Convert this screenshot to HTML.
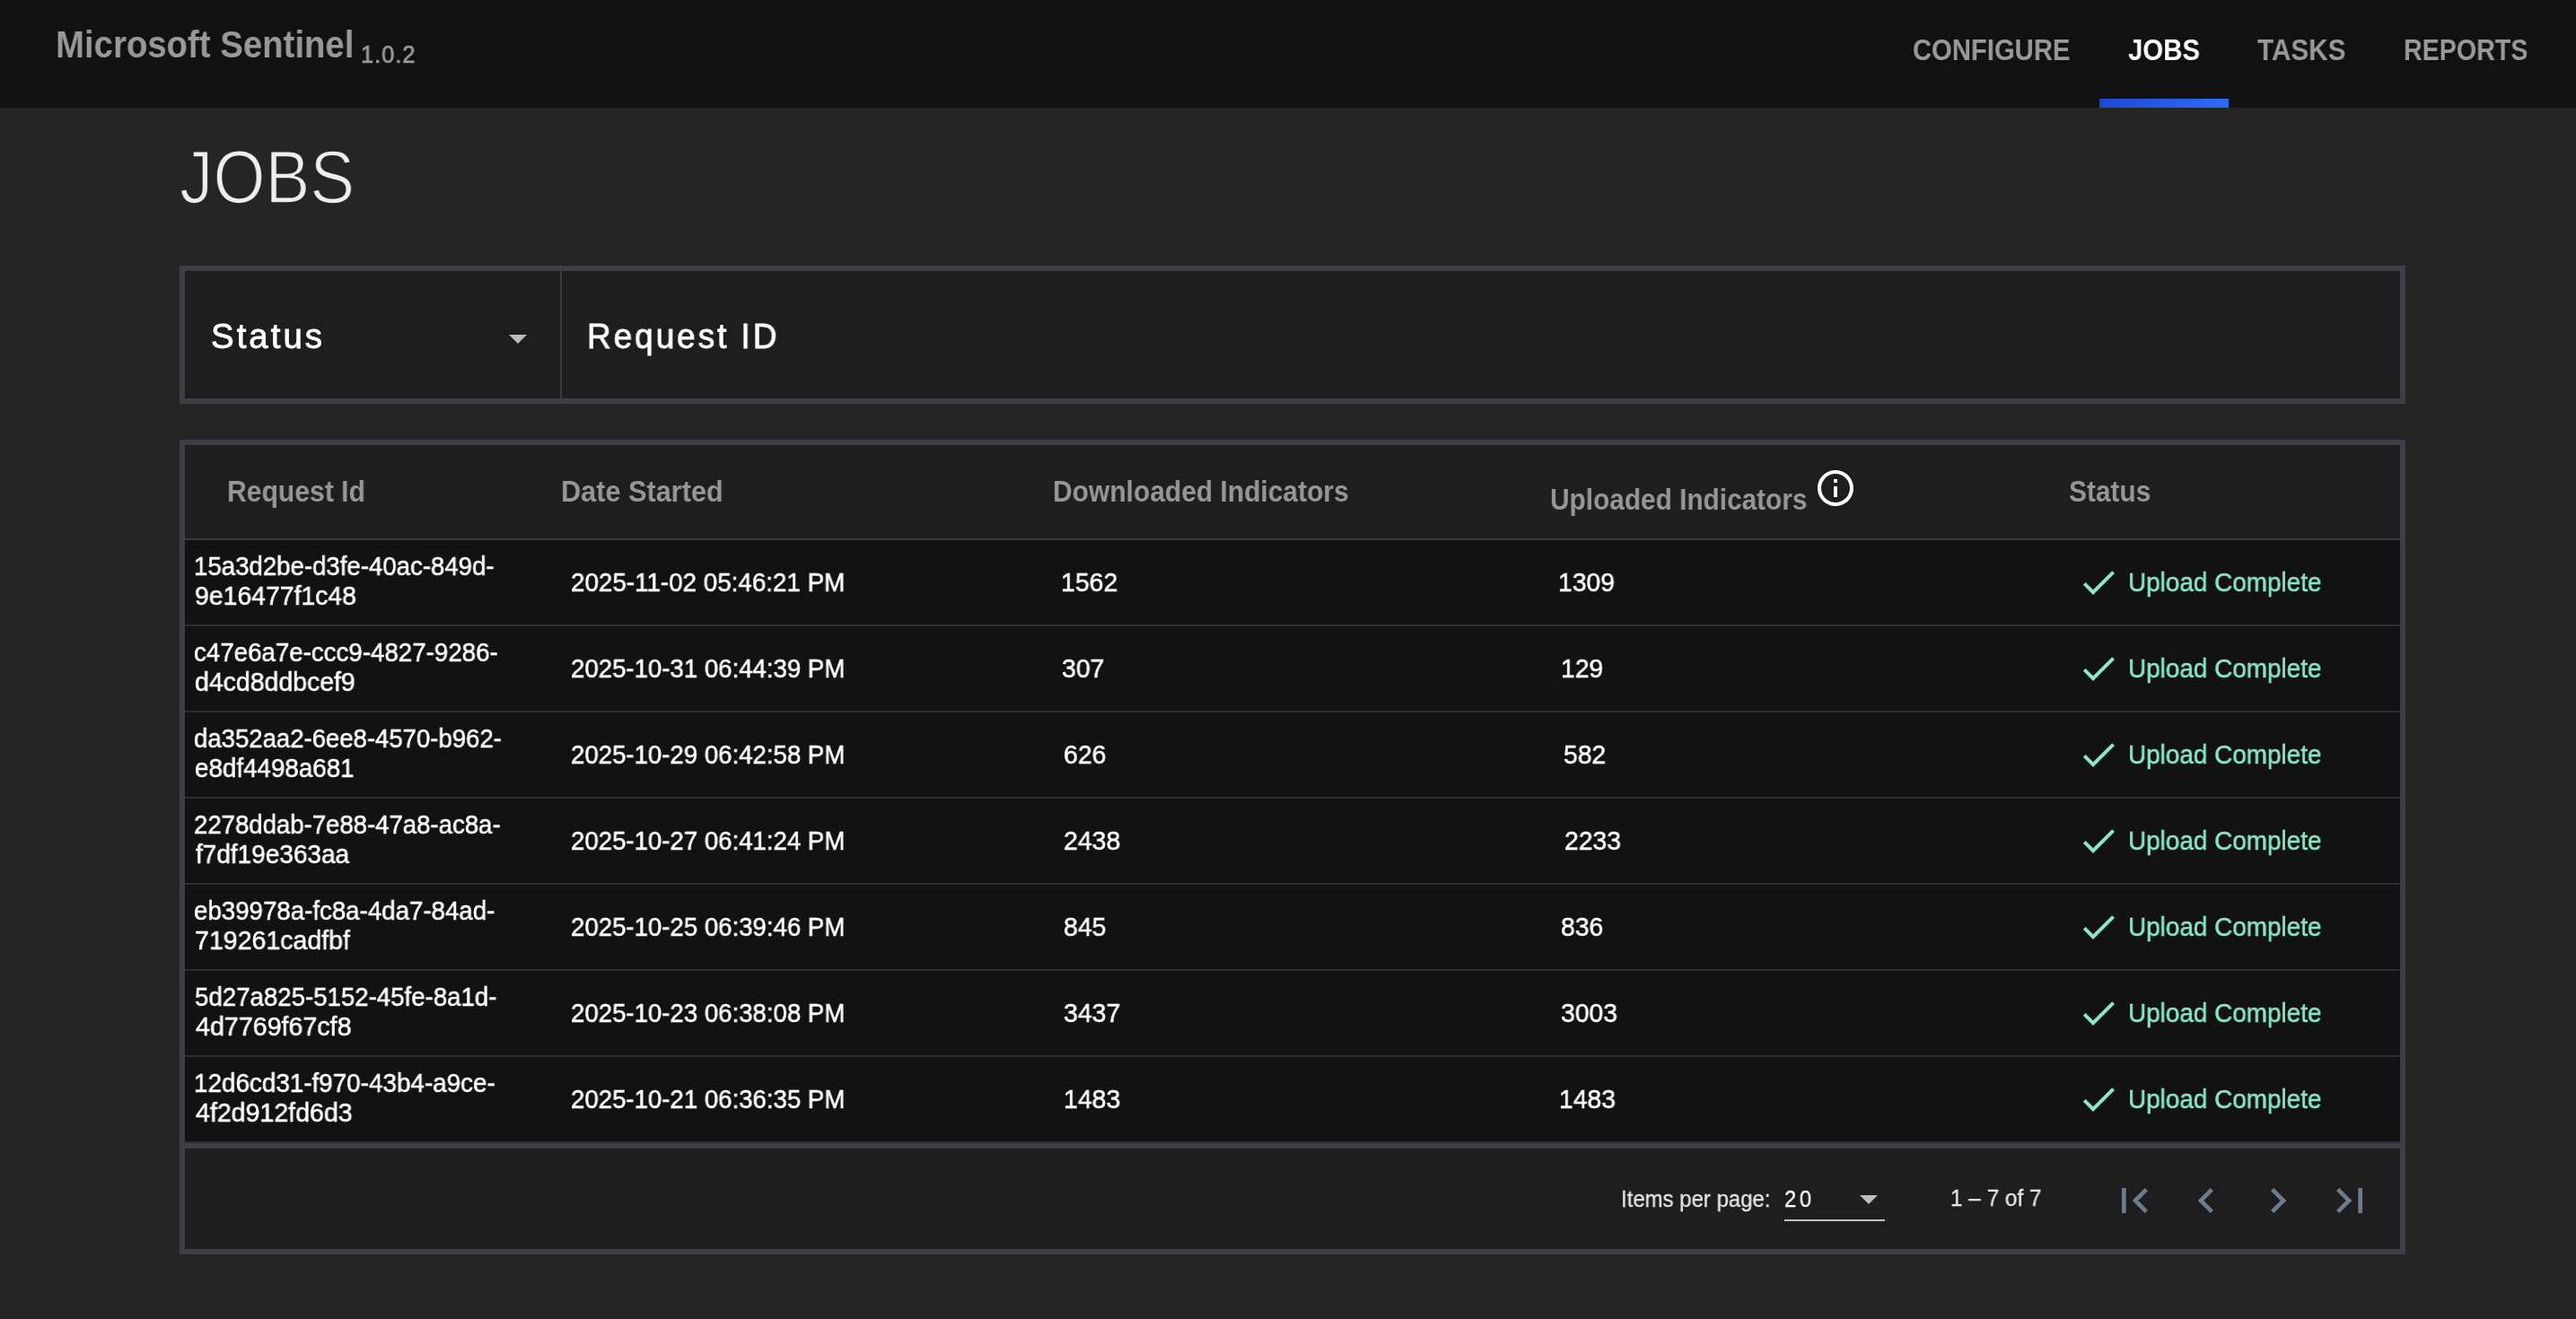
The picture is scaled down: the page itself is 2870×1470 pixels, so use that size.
<!DOCTYPE html>
<html><head><meta charset="utf-8"><title>Microsoft Sentinel - Jobs</title>
<style>
html,body{margin:0;padding:0;}
body{width:2870px;height:1470px;overflow:hidden;background:#252525;position:relative;font-family:"Liberation Sans",sans-serif;}
.r{position:absolute;display:block;}
.t{position:absolute;white-space:pre;transform-origin:0 50%;-webkit-font-smoothing:antialiased;will-change:transform;}
@media (max-width:2000px){html{zoom:0.5;}}
</style></head><body>
<div class="r" style="left:0px;top:0px;width:2870px;height:120px;background:#111111;"></div>
<div class="r" style="left:2339px;top:110px;width:144px;height:10px;background:linear-gradient(90deg,#1c49d2,#2e6cfb);"></div>
<div class="r" style="left:200px;top:296px;width:2480px;height:154px;background:#3e3e48;"></div>
<div class="r" style="left:206px;top:302px;width:2468px;height:142px;background:#1e1e1e;"></div>
<div class="r" style="left:624px;top:302px;width:2px;height:142px;background:#3a3a44;"></div>
<div class="r" style="left:200px;top:490px;width:2480px;height:908px;background:#3e3e48;"></div>
<div class="r" style="left:206px;top:496px;width:2468px;height:104px;background:#1e1e1e;"></div>
<div class="r" style="left:206px;top:600px;width:2468px;height:2px;background:#3a3a3a;"></div>
<div class="r" style="left:206px;top:602px;width:2468px;height:94px;background:#121212;"></div>
<div class="r" style="left:206px;top:696px;width:2468px;height:2px;background:#2e2e2e;"></div>
<div class="r" style="left:206px;top:698px;width:2468px;height:94px;background:#121212;"></div>
<div class="r" style="left:206px;top:792px;width:2468px;height:2px;background:#2e2e2e;"></div>
<div class="r" style="left:206px;top:794px;width:2468px;height:94px;background:#121212;"></div>
<div class="r" style="left:206px;top:888px;width:2468px;height:2px;background:#2e2e2e;"></div>
<div class="r" style="left:206px;top:890px;width:2468px;height:94px;background:#121212;"></div>
<div class="r" style="left:206px;top:984px;width:2468px;height:2px;background:#2e2e2e;"></div>
<div class="r" style="left:206px;top:986px;width:2468px;height:94px;background:#121212;"></div>
<div class="r" style="left:206px;top:1080px;width:2468px;height:2px;background:#2e2e2e;"></div>
<div class="r" style="left:206px;top:1082px;width:2468px;height:94px;background:#121212;"></div>
<div class="r" style="left:206px;top:1176px;width:2468px;height:2px;background:#2e2e2e;"></div>
<div class="r" style="left:206px;top:1178px;width:2468px;height:94px;background:#121212;"></div>
<div class="r" style="left:206px;top:1272px;width:2468px;height:2px;background:#2e2e2e;"></div>
<div class="r" style="left:206px;top:1280px;width:2468px;height:112px;background:#1e1e1e;"></div>
<div class="r" style="left:1988px;top:1359px;width:112px;height:2px;background:#c4c4c4;"></div>
<svg class="r" style="left:567px;top:373px" width="20" height="10" viewBox="0 0 20 10"><path d="M0 0h20L10 10z" fill="#bdbdbd"/></svg>
<svg class="r" style="left:2072px;top:1332px" width="20" height="10" viewBox="0 0 20 10"><path d="M0 0h20L10 10z" fill="#bdbdbd"/></svg>
<svg class="r" style="left:2021px;top:520px" width="48" height="48" viewBox="0 0 24 24"><path fill="#ffffff" d="M11 7h2v2h-2zm0 4h2v6h-2zm1-9C6.48 2 2 6.48 2 12s4.48 10 10 10 10-4.48 10-10S17.52 2 12 2zm0 18c-4.41 0-8-3.59-8-8s3.59-8 8-8 8 3.59 8 8-3.59 8-8 8z"/></svg>
<svg class="r" style="left:2314px;top:625px" width="48" height="48" viewBox="0 0 24 24"><path fill="#8ae6c6" d="M9 16.17L4.83 12l-1.42 1.41L9 19 21 7l-1.41-1.41z"/></svg>
<svg class="r" style="left:2314px;top:721px" width="48" height="48" viewBox="0 0 24 24"><path fill="#8ae6c6" d="M9 16.17L4.83 12l-1.42 1.41L9 19 21 7l-1.41-1.41z"/></svg>
<svg class="r" style="left:2314px;top:817px" width="48" height="48" viewBox="0 0 24 24"><path fill="#8ae6c6" d="M9 16.17L4.83 12l-1.42 1.41L9 19 21 7l-1.41-1.41z"/></svg>
<svg class="r" style="left:2314px;top:913px" width="48" height="48" viewBox="0 0 24 24"><path fill="#8ae6c6" d="M9 16.17L4.83 12l-1.42 1.41L9 19 21 7l-1.41-1.41z"/></svg>
<svg class="r" style="left:2314px;top:1009px" width="48" height="48" viewBox="0 0 24 24"><path fill="#8ae6c6" d="M9 16.17L4.83 12l-1.42 1.41L9 19 21 7l-1.41-1.41z"/></svg>
<svg class="r" style="left:2314px;top:1105px" width="48" height="48" viewBox="0 0 24 24"><path fill="#8ae6c6" d="M9 16.17L4.83 12l-1.42 1.41L9 19 21 7l-1.41-1.41z"/></svg>
<svg class="r" style="left:2314px;top:1201px" width="48" height="48" viewBox="0 0 24 24"><path fill="#8ae6c6" d="M9 16.17L4.83 12l-1.42 1.41L9 19 21 7l-1.41-1.41z"/></svg>
<svg class="r" style="left:2350px;top:1310px" width="56" height="56" viewBox="0 0 24 24"><path fill="#6d7b91" d="M18.41 16.59L13.82 12l4.59-4.59L17 6l-6 6 6 6zM6 6h2v12H6z"/></svg>
<svg class="r" style="left:2430px;top:1310px" width="56" height="56" viewBox="0 0 24 24"><path fill="#6d7b91" d="M15.41 7.41L14 6l-6 6 6 6 1.41-1.41L10.83 12z"/></svg>
<svg class="r" style="left:2510px;top:1310px" width="56" height="56" viewBox="0 0 24 24"><path fill="#6d7b91" d="M10 6L8.59 7.41 13.17 12l-4.58 4.59L10 18l6-6z"/></svg>
<svg class="r" style="left:2590px;top:1310px" width="56" height="56" viewBox="0 0 24 24"><path fill="#6d7b91" d="M5.59 7.41L10.18 12l-4.59 4.59L7 18l6-6-6-6zM16 6h2v12h-2z"/></svg>
<span class="t" style="left:62.22px;top:28.00px;font-size:43px;line-height:43px;color:#989898;font-weight:bold;transform:scaleX(0.8919);">Microsoft Sentinel</span>
<span class="t" style="left:402.46px;top:48.04px;font-size:27px;line-height:27px;color:#989898;letter-spacing:1px;-webkit-text-stroke:0.7px #989898;transform:scaleX(0.9454);">1.0.2</span>
<span class="t" style="left:2131.41px;top:39.07px;font-size:33px;line-height:33px;color:#999999;font-weight:bold;transform:scaleX(0.8858);">CONFIGURE</span>
<span class="t" style="left:2370.80px;top:39.07px;font-size:33px;line-height:33px;color:#ffffff;font-weight:bold;transform:scaleX(0.8914);">JOBS</span>
<span class="t" style="left:2515.40px;top:39.07px;font-size:33px;line-height:33px;color:#999999;font-weight:bold;transform:scaleX(0.8996);">TASKS</span>
<span class="t" style="left:2677.86px;top:39.07px;font-size:33px;line-height:33px;color:#999999;font-weight:bold;transform:scaleX(0.8677);">REPORTS</span>
<span class="t" style="left:200.26px;top:155.39px;font-size:84px;line-height:84px;color:#eeeeee;-webkit-text-stroke:1.7px #252525;transform:scaleX(0.8901);">JOBS</span>
<span class="t" style="left:235.19px;top:356.23px;font-size:38px;line-height:38px;color:#ffffff;letter-spacing:3px;-webkit-text-stroke:0.8px #ffffff;transform:scaleX(1.0105);">Status</span>
<span class="t" style="left:654.18px;top:356.03px;font-size:38px;line-height:38px;color:#ffffff;letter-spacing:3px;-webkit-text-stroke:0.8px #ffffff;transform:scaleX(0.9739);">Request ID</span>
<span class="t" style="left:253.47px;top:531.47px;font-size:33px;line-height:33px;color:#979797;font-weight:bold;transform:scaleX(0.9129);">Request Id</span>
<span class="t" style="left:624.74px;top:531.27px;font-size:33px;line-height:33px;color:#979797;font-weight:bold;transform:scaleX(0.9294);">Date Started</span>
<span class="t" style="left:1172.58px;top:531.07px;font-size:33px;line-height:33px;color:#979797;font-weight:bold;transform:scaleX(0.9080);">Downloaded Indicators</span>
<span class="t" style="left:1727.00px;top:540.17px;font-size:33px;line-height:33px;color:#979797;font-weight:bold;transform:scaleX(0.9033);">Uploaded Indicators</span>
<span class="t" style="left:2304.90px;top:531.07px;font-size:33px;line-height:33px;color:#979797;font-weight:bold;transform:scaleX(0.9055);">Status</span>
<span class="t" style="left:216.05px;top:617.35px;font-size:29px;line-height:29px;color:#ffffff;-webkit-text-stroke:0.5px #ffffff;transform:scaleX(0.9520);">15a3d2be-d3fe-40ac-849d-</span>
<span class="t" style="left:216.77px;top:650.05px;font-size:29px;line-height:29px;color:#ffffff;-webkit-text-stroke:0.5px #ffffff;transform:scaleX(0.9790);">9e16477f1c48</span>
<span class="t" style="left:635.79px;top:635.25px;font-size:29px;line-height:29px;color:#ffffff;-webkit-text-stroke:0.5px #ffffff;transform:scaleX(0.9581);">2025-11-02 05:46:21 PM</span>
<span class="t" style="left:1182.39px;top:635.25px;font-size:29px;line-height:29px;color:#ffffff;-webkit-text-stroke:0.5px #ffffff;transform:scaleX(0.9791);">1562</span>
<span class="t" style="left:1735.70px;top:635.25px;font-size:29px;line-height:29px;color:#ffffff;-webkit-text-stroke:0.5px #ffffff;transform:scaleX(0.9742);">1309</span>
<span class="t" style="left:2371.23px;top:635.05px;font-size:29px;line-height:29px;color:#8ae6c6;-webkit-text-stroke:0.5px #8ae6c6;transform:scaleX(0.9613);">Upload Complete</span>
<span class="t" style="left:215.90px;top:713.35px;font-size:29px;line-height:29px;color:#ffffff;-webkit-text-stroke:0.5px #ffffff;transform:scaleX(0.9549);">c47e6a7e-ccc9-4827-9286-</span>
<span class="t" style="left:216.77px;top:746.05px;font-size:29px;line-height:29px;color:#ffffff;-webkit-text-stroke:0.5px #ffffff;transform:scaleX(0.9812);">d4cd8ddbcef9</span>
<span class="t" style="left:635.80px;top:731.25px;font-size:29px;line-height:29px;color:#ffffff;-webkit-text-stroke:0.5px #ffffff;transform:scaleX(0.9516);">2025-10-31 06:44:39 PM</span>
<span class="t" style="left:1183.07px;top:731.25px;font-size:29px;line-height:29px;color:#ffffff;-webkit-text-stroke:0.5px #ffffff;transform:scaleX(0.9791);">307</span>
<span class="t" style="left:1738.50px;top:731.25px;font-size:29px;line-height:29px;color:#ffffff;-webkit-text-stroke:0.5px #ffffff;transform:scaleX(0.9742);">129</span>
<span class="t" style="left:2371.23px;top:731.05px;font-size:29px;line-height:29px;color:#8ae6c6;-webkit-text-stroke:0.5px #8ae6c6;transform:scaleX(0.9613);">Upload Complete</span>
<span class="t" style="left:216.10px;top:809.35px;font-size:29px;line-height:29px;color:#ffffff;-webkit-text-stroke:0.5px #ffffff;transform:scaleX(0.9493);">da352aa2-6ee8-4570-b962-</span>
<span class="t" style="left:216.79px;top:842.05px;font-size:29px;line-height:29px;color:#ffffff;-webkit-text-stroke:0.5px #ffffff;transform:scaleX(0.9578);">e8df4498a681</span>
<span class="t" style="left:635.80px;top:827.25px;font-size:29px;line-height:29px;color:#ffffff;-webkit-text-stroke:0.5px #ffffff;transform:scaleX(0.9516);">2025-10-29 06:42:58 PM</span>
<span class="t" style="left:1185.27px;top:827.25px;font-size:29px;line-height:29px;color:#ffffff;-webkit-text-stroke:0.5px #ffffff;transform:scaleX(0.9791);">626</span>
<span class="t" style="left:1741.78px;top:827.25px;font-size:29px;line-height:29px;color:#ffffff;-webkit-text-stroke:0.5px #ffffff;transform:scaleX(0.9742);">582</span>
<span class="t" style="left:2371.23px;top:827.05px;font-size:29px;line-height:29px;color:#8ae6c6;-webkit-text-stroke:0.5px #8ae6c6;transform:scaleX(0.9613);">Upload Complete</span>
<span class="t" style="left:216.30px;top:905.35px;font-size:29px;line-height:29px;color:#ffffff;-webkit-text-stroke:0.5px #ffffff;transform:scaleX(0.9500);">2278ddab-7e88-47a8-ac8a-</span>
<span class="t" style="left:217.75px;top:938.05px;font-size:29px;line-height:29px;color:#ffffff;-webkit-text-stroke:0.5px #ffffff;transform:scaleX(0.9643);">f7df19e363aa</span>
<span class="t" style="left:635.80px;top:923.25px;font-size:29px;line-height:29px;color:#ffffff;-webkit-text-stroke:0.5px #ffffff;transform:scaleX(0.9516);">2025-10-27 06:41:24 PM</span>
<span class="t" style="left:1185.27px;top:923.25px;font-size:29px;line-height:29px;color:#ffffff;-webkit-text-stroke:0.5px #ffffff;transform:scaleX(0.9791);">2438</span>
<span class="t" style="left:1742.78px;top:923.25px;font-size:29px;line-height:29px;color:#ffffff;-webkit-text-stroke:0.5px #ffffff;transform:scaleX(0.9742);">2233</span>
<span class="t" style="left:2371.23px;top:923.05px;font-size:29px;line-height:29px;color:#8ae6c6;-webkit-text-stroke:0.5px #8ae6c6;transform:scaleX(0.9613);">Upload Complete</span>
<span class="t" style="left:215.70px;top:1001.35px;font-size:29px;line-height:29px;color:#ffffff;-webkit-text-stroke:0.5px #ffffff;transform:scaleX(0.9541);">eb39978a-fc8a-4da7-84ad-</span>
<span class="t" style="left:216.77px;top:1034.05px;font-size:29px;line-height:29px;color:#ffffff;-webkit-text-stroke:0.5px #ffffff;transform:scaleX(0.9840);">719261cadfbf</span>
<span class="t" style="left:635.80px;top:1019.25px;font-size:29px;line-height:29px;color:#ffffff;-webkit-text-stroke:0.5px #ffffff;transform:scaleX(0.9516);">2025-10-25 06:39:46 PM</span>
<span class="t" style="left:1185.47px;top:1019.25px;font-size:29px;line-height:29px;color:#ffffff;-webkit-text-stroke:0.5px #ffffff;transform:scaleX(0.9791);">845</span>
<span class="t" style="left:1739.28px;top:1019.25px;font-size:29px;line-height:29px;color:#ffffff;-webkit-text-stroke:0.5px #ffffff;transform:scaleX(0.9742);">836</span>
<span class="t" style="left:2371.23px;top:1019.05px;font-size:29px;line-height:29px;color:#8ae6c6;-webkit-text-stroke:0.5px #8ae6c6;transform:scaleX(0.9613);">Upload Complete</span>
<span class="t" style="left:216.70px;top:1097.35px;font-size:29px;line-height:29px;color:#ffffff;-webkit-text-stroke:0.5px #ffffff;transform:scaleX(0.9529);">5d27a825-5152-45fe-8a1d-</span>
<span class="t" style="left:217.75px;top:1130.05px;font-size:29px;line-height:29px;color:#ffffff;-webkit-text-stroke:0.5px #ffffff;transform:scaleX(0.9872);">4d7769f67cf8</span>
<span class="t" style="left:635.80px;top:1115.25px;font-size:29px;line-height:29px;color:#ffffff;-webkit-text-stroke:0.5px #ffffff;transform:scaleX(0.9516);">2025-10-23 06:38:08 PM</span>
<span class="t" style="left:1185.47px;top:1115.25px;font-size:29px;line-height:29px;color:#ffffff;-webkit-text-stroke:0.5px #ffffff;transform:scaleX(0.9791);">3437</span>
<span class="t" style="left:1739.28px;top:1115.25px;font-size:29px;line-height:29px;color:#ffffff;-webkit-text-stroke:0.5px #ffffff;transform:scaleX(0.9742);">3003</span>
<span class="t" style="left:2371.23px;top:1115.05px;font-size:29px;line-height:29px;color:#8ae6c6;-webkit-text-stroke:0.5px #8ae6c6;transform:scaleX(0.9613);">Upload Complete</span>
<span class="t" style="left:216.33px;top:1193.35px;font-size:29px;line-height:29px;color:#ffffff;-webkit-text-stroke:0.5px #ffffff;transform:scaleX(0.9599);">12d6cd31-f970-43b4-a9ce-</span>
<span class="t" style="left:217.75px;top:1226.05px;font-size:29px;line-height:29px;color:#ffffff;-webkit-text-stroke:0.5px #ffffff;transform:scaleX(0.9843);">4f2d912fd6d3</span>
<span class="t" style="left:635.80px;top:1211.25px;font-size:29px;line-height:29px;color:#ffffff;-webkit-text-stroke:0.5px #ffffff;transform:scaleX(0.9516);">2025-10-21 06:36:35 PM</span>
<span class="t" style="left:1185.09px;top:1211.25px;font-size:29px;line-height:29px;color:#ffffff;-webkit-text-stroke:0.5px #ffffff;transform:scaleX(0.9791);">1483</span>
<span class="t" style="left:1736.90px;top:1211.25px;font-size:29px;line-height:29px;color:#ffffff;-webkit-text-stroke:0.5px #ffffff;transform:scaleX(0.9742);">1483</span>
<span class="t" style="left:2371.23px;top:1211.05px;font-size:29px;line-height:29px;color:#8ae6c6;-webkit-text-stroke:0.5px #8ae6c6;transform:scaleX(0.9613);">Upload Complete</span>
<span class="t" style="left:1806.03px;top:1324.24px;font-size:25px;line-height:25px;color:#e6e6e6;-webkit-text-stroke:0.3px #e6e6e6;transform:scaleX(0.9584);">Items per page:</span>
<span class="t" style="left:1987.53px;top:1323.39px;font-size:26px;line-height:26px;color:#ffffff;letter-spacing:4px;-webkit-text-stroke:0.3px #ffffff;transform:scaleX(0.9154);">20</span>
<span class="t" style="left:2172.78px;top:1323.24px;font-size:25px;line-height:25px;color:#e6e6e6;-webkit-text-stroke:0.3px #e6e6e6;transform:scaleX(0.9742);">1 – 7 of 7</span>
</body></html>
